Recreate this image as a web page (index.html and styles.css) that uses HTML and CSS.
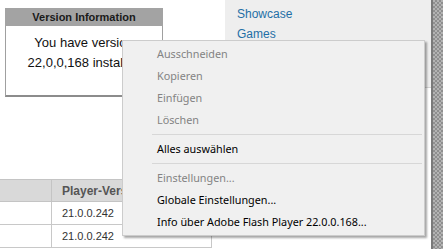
FILE: index.html
```html
<!DOCTYPE html>
<html lang="de">
<head>
    <meta charset="UTF-8">
    <title>Flash Player Version</title>
    <link rel="stylesheet" href="styles.css">
</head>
<body>
    <div class="page">
        <div class="main">
            <div class="top">
                <div class="version-box">
                    <div class="version-title">Version Information</div>
                    <p class="version-text">You have version<br>22,0,0,168 installed</p>
                </div>
                <div class="sidebar">
                    <a href="#">Showcase</a>
                    <a href="#">Games</a>
                </div>
            </div>
            <table class="versions">
                <tr>
                    <th class="col-os"></th>
                    <th>Player-Version</th>
                </tr>
                <tr>
                    <td></td>
                    <td>21.0.0.242</td>
                </tr>
                <tr>
                    <td></td>
                    <td>21.0.0.242</td>
                </tr>
            </table>
        </div>
        <div class="scroller"></div>
    </div>

    <!-- context menu over the page -->
    <ul class="menu">
        <li class="disabled">Ausschneiden</li>
        <li class="disabled">Kopieren</li>
        <li class="disabled">Einfügen</li>
        <li class="disabled">Löschen</li>
        <li class="sep"></li>
        <li>Alles auswählen</li>
        <li class="sep"></li>
        <li class="disabled">Einstellungen...</li>
        <li>Globale Einstellungen...</li>
        <li>Info über Adobe Flash Player 22.0.0.168...</li>
    </ul>
</body>
</html>
```

FILE: styles.css
```css
body {
    margin: 0;
    font-family: "Liberation Sans", Arial, sans-serif;
    background: #fff;
    color: #000;
    position: relative;
    overflow: hidden;
}
.page {
    display: flex;
    height: 249px;
}
.main {
    flex: 1;
}
.top {
    display: flex;
    align-items: flex-start;
}
.version-box {
    margin: 8px 0 0 5px;
    width: 156px;
    height: 87px;
    border: 1px solid #a0a0a0;
    border-bottom: 2px solid #8c8c8c;
    border-top: none;
}
.version-title {
    background: #a3a3a3;
    height: 18px;
    line-height: 18px;
    text-align: center;
    font-size: 11px;
    font-weight: bold;
    color: #1a1a1a;
    margin: 0 -1px;
}
.version-text {
    margin: 7px 0 0;
    text-align: center;
    font-size: 13px;
    line-height: 20px;
    color: #111;
}
.sidebar {
    margin-left: auto;
    width: 194px;
    height: 80px;
    background: #eeeeee;
    border-bottom: 1px solid #d4d4d4;
    padding: 7px 0 0 12px;
    display: flex;
    flex-direction: column;
    gap: 6px;
}
.sidebar a {
    color: #1f6fa6;
    text-decoration: none;
    font-size: 12px;
    line-height: 14px;
}
.versions {
    margin-top: 82px;
    border-collapse: collapse;
    width: 212px;
    font-size: 11px;
}
.versions th {
    background: #d9d9d9;
    height: 21px;
    border: 1px solid #c4c4c4;
    border-left: none;
    text-align: left;
    padding: 0 10px;
    font-size: 12px;
    color: #555;
}
.versions td {
    height: 22px;
    border: 1px solid #c8c8c8;
    border-left: none;
    padding: 0 10px;
    color: #333;
}
.versions .col-os {
    width: 31px;
}
.scroller {
    width: 12px;
    background: repeating-conic-gradient(#8f8f8f 0 25%, #b3b3b3 0 50%) 0 0 / 4px 4px;
    border-left: 2px solid #7a7a7a;
    box-sizing: border-box;
}
.menu {
    position: absolute;
    left: 122px;
    top: 40px;
    width: 301px;
    margin: 0;
    padding: 2px 0;
    list-style: none;
    background: #f0f0f0;
    border: 1px solid #cccccc;
    box-shadow: 2px 2px 2px rgba(0, 0, 0, 0.35);
    font-family: "Noto Sans", sans-serif;
    font-size: 10.8px;
}
.menu li {
    height: 22px;
    line-height: 22px;
    padding-left: 34px;
}
.menu .disabled {
    color: #838383;
}
.menu .sep {
    height: 1px;
    margin: 3px 2px 3px 29px;
    padding: 0;
    background: #d7d7d7;
}
```
